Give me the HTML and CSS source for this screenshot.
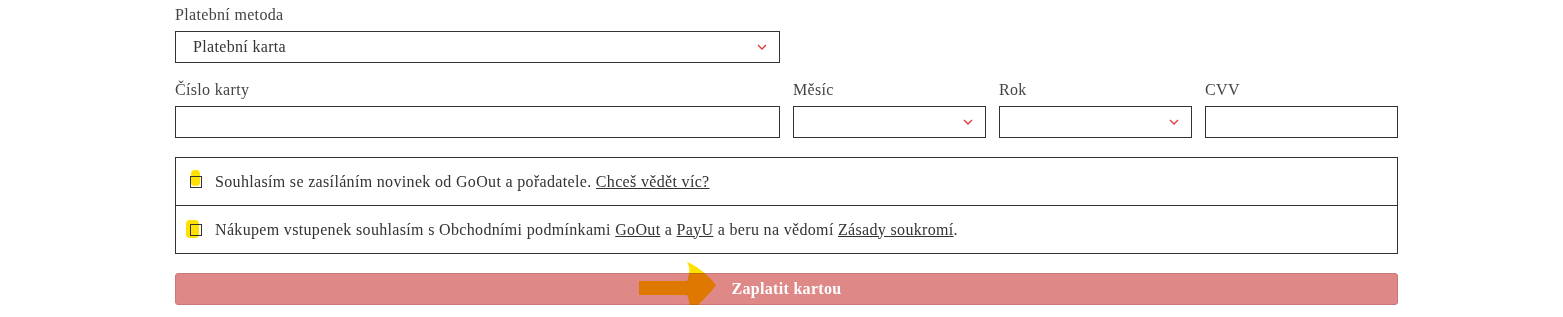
FILE: index.html
```html
<!DOCTYPE html>
<html lang="cs">
<head>
<meta charset="utf-8">
<title>Platba</title>
<link rel="stylesheet" href="styles.css">
</head>
<body>
<form class="pay">
  <div class="row row-method">
    <div class="field">
      <label class="lbl">Platební metoda</label>
      <div class="select"><span class="select-text">Platební karta</span><svg class="chev" viewBox="0 0 10 6" width="10" height="6"><path d="M1 1 L5 5 L9 1" fill="none" stroke="#e0383c" stroke-width="1.3"/></svg></div>
    </div>
  </div>
  <div class="row row-card">
    <div class="field">
      <label class="lbl">Číslo karty</label>
      <div class="input"></div>
    </div>
    <div class="field">
      <label class="lbl">Měsíc</label>
      <div class="select"><span class="select-text"></span><svg class="chev" viewBox="0 0 10 6" width="10" height="6"><path d="M1 1 L5 5 L9 1" fill="none" stroke="#e0383c" stroke-width="1.3"/></svg></div>
    </div>
    <div class="field">
      <label class="lbl">Rok</label>
      <div class="select"><span class="select-text"></span><svg class="chev" viewBox="0 0 10 6" width="10" height="6"><path d="M1 1 L5 5 L9 1" fill="none" stroke="#e0383c" stroke-width="1.3"/></svg></div>
    </div>
    <div class="field">
      <label class="lbl">CVV</label>
      <div class="input"></div>
    </div>
  </div>
  <div class="consents">
    <div class="consent">
      <span class="cb-wrap"><span class="hl hl-1"></span><span class="cb"></span></span>
      <span class="ctext">Souhlasím se zasíláním novinek od GoOut a pořadatele. <a href="#">Chceš vědět víc?</a></span>
    </div>
    <div class="consent">
      <span class="cb-wrap"><span class="hl hl-2"></span><span class="cb"></span></span>
      <span class="ctext">Nákupem vstupenek souhlasím s Obchodními podmínkami <a href="#">GoOut</a> a <a href="#">PayU</a> a beru na vědomí <a href="#">Zásady soukromí</a>.</span>
    </div>
  </div>
  <div class="btn-wrap">
    <button type="button" class="btn">Zaplatit kartou</button>
    <svg class="arrow" viewBox="0 0 80 50" width="80" height="50"><path d="M0 19 H48 C51 11 51 5 48 0 C57 3 69 13 77 23 C70 33 60 42 52 49 C51 44 50 38 48 33 H0 Z" fill="#ffe100"/></svg>
  </div>
</form>
</body>
</html>
```
FILE: styles.css
```css
html, body {
  margin: 0;
  padding: 0;
  background: #fff;
}
body {
  font-family: "Liberation Serif", "Times New Roman", serif;
  font-size: 16px;
  letter-spacing: 0.33px;
  color: #333;
}
.pay {
  width: 1223px;
  margin-left: 175px;
  padding-top: 5px;
}
.row {
  display: grid;
  grid-template-columns: 605px repeat(3, 1fr);
  column-gap: 13px;
}
.row-method {
  margin-bottom: 17px;
}
.field {
  display: flex;
  flex-direction: column;
}
.lbl {
  line-height: 20px;
  margin-bottom: 6px;
  color: #444;
}
.select, .input {
  box-sizing: border-box;
  height: 32px;
  border: 1px solid #333;
  background: #fff;
  display: flex;
  align-items: center;
}
.select {
  padding: 0 12px 0 17px;
  justify-content: space-between;
}
.select-text {
  line-height: 20px;
  color: #333;
}
.chev {
  display: block;
  margin-top: 0;
}
.consents {
  margin-top: 19px;
  border: 1px solid #333;
}
.consent {
  height: 47px;
  display: flex;
  align-items: center;
  padding-left: 14px;
}
.consent + .consent {
  border-top: 1px solid #333;
  height: 47px;
}
.cb-wrap {
  position: relative;
  width: 12px;
  height: 12px;
  margin-right: 13px;
  flex: none;
}
.cb {
  position: absolute;
  inset: 0;
  box-sizing: border-box;
  border: 1px solid #333;
}
.hl {
  position: absolute;
  background: #ffe100;
  border-radius: 4px;
}
.hl-1 {
  left: 1px;
  top: -6px;
  width: 9px;
  height: 16px;
}
.hl-2 {
  left: -4px;
  top: -4px;
  width: 13px;
  height: 18px;
}
.ctext {
  line-height: 20px;
}
.ctext a {
  color: #333;
  text-decoration: underline;
}
.btn-wrap {
  position: relative;
  margin-top: 19px;
}
.btn {
  display: block;
  width: 100%;
  height: 32px;
  border: 1px solid #c77878;
  border-radius: 3px;
  background: #df8888;
  color: #fff;
  font-family: "Liberation Serif", "Times New Roman", serif;
  font-weight: bold;
  font-size: 16px;
  letter-spacing: 0.3px;
  padding: 0;
  cursor: pointer;
}
.arrow {
  position: absolute;
  left: 464px;
  top: -11px;
  mix-blend-mode: multiply;
}
```
